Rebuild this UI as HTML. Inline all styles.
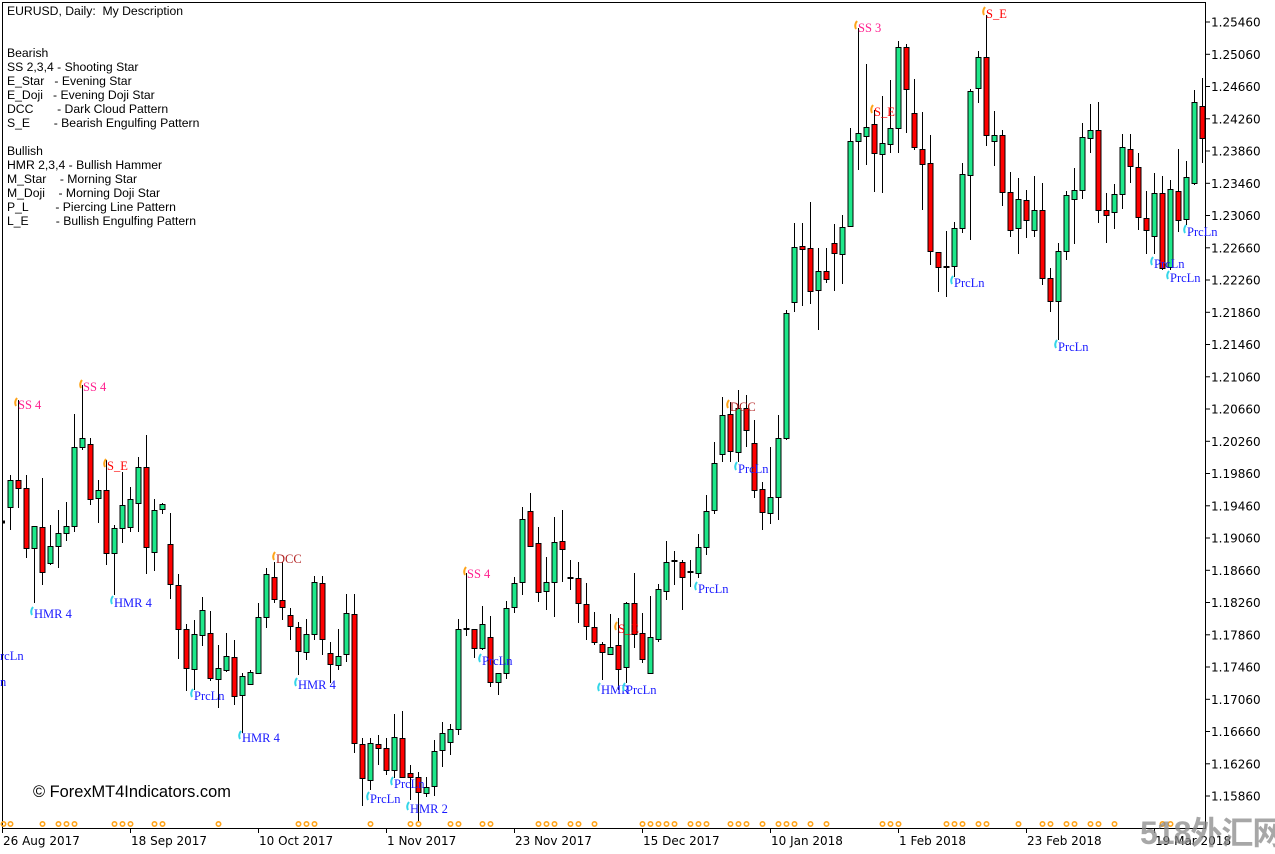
<!DOCTYPE html>
<html><head><meta charset="utf-8">
<style>
html,body{margin:0;padding:0;background:#fff;}
body{width:1275px;height:852px;overflow:hidden;position:relative;font-family:"DejaVu Sans","Liberation Sans",sans-serif;}
#legend{position:absolute;left:7px;top:4px;font-size:12.2px;line-height:14px;white-space:pre;color:#000;font-family:"Liberation Sans",sans-serif;}
#wm{position:absolute;left:1140px;top:808px;font-size:32px;font-weight:bold;color:#8a8a8a;opacity:.75;font-family:"Liberation Sans","Noto Sans CJK SC",sans-serif;letter-spacing:-1px;white-space:nowrap;}
#copy{position:absolute;left:33px;top:783px;font-size:16.4px;font-family:"Liberation Sans",sans-serif;color:#000;white-space:nowrap;}
svg{position:absolute;left:0;top:0;}
</style></head><body>
<svg id="s" width="1275" height="852" xmlns="http://www.w3.org/2000/svg"></svg>
<div id="legend">EURUSD, Daily:  My Description


Bearish
SS 2,3,4 - Shooting Star
E_Star   - Evening Star
E_Doji   - Evening Doji Star
DCC       - Dark Cloud Pattern
S_E       - Bearish Engulfing Pattern

Bullish
HMR 2,3,4 - Bullish Hammer
M_Star    - Morning Star
M_Doji    - Morning Doji Star
P_L        - Piercing Line Pattern
L_E        - Bullish Engulfing Pattern</div>
<div id="copy">© ForexMT4Indicators.com</div>
<div id="wm">518外汇网</div>
<script>
var C=[
[507,480,475,530],[480,488,400,508],[488,548,475,558],[548,526,526,603],[527,572,478,585],
[563,546,525,565],[546,533,510,568],[533,526,502,541],[526,447,414,532],[447,438,385,450],
[444,499,438,505],[498,490,480,523],[490,553,460,565],[553,528,525,595],[528,505,472,543],
[527,499,487,532],[503,467,457,532],[467,547,435,574],[552,510,499,571],[509,504,503,514],
[544,584,513,599],[585,629,574,659],[629,668,624,691],[669,634,620,690],[635,610,597,646],
[633,678,611,681],[679,668,645,708],[670,656,633,672],[657,696,640,705],[695,676,673,733],
[684,672,670,684],[673,617,603,674],[617,574,568,628],[577,599,562,603],[600,607,562,620],
[615,626,608,640],[627,651,622,675],[652,634,619,660],[634,582,576,640],[583,639,576,655],
[653,664,642,683],[665,656,629,670],[654,613,594,662],[614,743,594,753],[744,778,738,806],
[780,743,738,790],[744,748,735,765],[748,770,738,775],[770,737,714,778],[738,777,711,778],
[773,777,765,800],[777,792,772,822],[793,787,777,797],[786,751,740,796],[750,733,722,767],
[742,729,724,755],[729,629,619,735],[629,629,573,636],[629,648,629,658],[648,624,606,650],
[637,682,616,687],[682,673,673,695],[673,608,601,679],[607,583,577,613],[582,519,507,595],
[511,546,493,546],[543,592,527,602],[591,582,557,610],[582,542,517,617],[541,549,510,582],
[578,578,560,590],[578,603,562,623],[604,626,583,640],[627,642,612,645],[644,652,642,680],
[654,647,614,655],[645,669,618,690],[667,603,602,683],[603,634,573,648],[633,659,613,663],
[673,637,596,674],[639,589,584,642],[591,562,541,600],[561,561,551,585],[562,577,560,610],
[572,572,560,587],[573,547,534,578],[547,511,495,555],[510,463,442,514],[454,415,397,462],
[414,451,402,462],[452,408,390,462],[408,430,395,447],[443,490,420,498],[489,512,482,530],
[513,497,447,524],[497,438,415,520],[438,313,310,440],[302,247,223,312],[246,249,223,306],
[248,291,202,304],[290,271,248,330],[271,279,248,283],[243,253,224,291],[254,227,215,284],
[226,141,128,227],[141,133,28,170],[136,127,64,165],[124,153,110,192],[154,143,96,193],
[144,128,80,153],[128,47,41,153],[47,89,44,133],[113,147,79,150],[149,164,112,210],
[163,251,135,265],[252,267,252,292],[267,267,231,297],[266,228,222,277],[228,174,163,233],
[175,91,89,240],[88,57,51,103],[57,135,15,146],[141,135,111,166],[135,192,130,206],
[192,230,172,237],[228,199,178,254],[200,220,190,238],[230,210,176,237],[210,278,183,285],
[278,301,268,312],[301,251,243,340],[251,195,191,260],[199,190,168,244],[190,137,123,199],
[138,130,104,153],[130,210,102,223],[210,215,193,243],[212,194,184,229],[194,147,134,209],
[149,166,134,183],[167,217,153,230],[218,230,191,254],[236,193,173,254],[193,268,176,270],
[267,189,180,270],[191,220,149,232],[219,177,161,225],[183,102,90,185],[106,138,78,163]];
var s=document.getElementById('s'),h='';
h+='<rect x="2.5" y="2.5" width="1203" height="826" fill="none" stroke="#000" stroke-width="1"/>';
for(var k=0;k<25;k++){var y=22+k*32.25,v=(1.25460-k*0.004).toFixed(5);
 if(y>828)break;
 h+='<line x1="1205" y1="'+y.toFixed(1)+'" x2="1210" y2="'+y.toFixed(1)+'" stroke="#000"/>';
 h+='<text x="1211" y="'+(y+4.5).toFixed(1)+'" font-size="12" font-family="DejaVu Sans,Liberation Sans,sans-serif" fill="#000">'+v+'</text>';}
var D=[[2,'26 Aug 2017'],[130,'18 Sep 2017'],[258,'10 Oct 2017'],[386,'1 Nov 2017'],[514,'23 Nov 2017'],[642,'15 Dec 2017'],[770,'10 Jan 2018'],[898,'1 Feb 2018'],[1026,'23 Feb 2018'],[1154,'19 Mar 2018']];
D.forEach(function(d){h+='<line x1="'+(d[0]+.5)+'" y1="828" x2="'+(d[0]+.5)+'" y2="833" stroke="#000"/>';
 h+='<text x="'+(d[0]+1)+'" y="845" font-size="12" font-family="DejaVu Sans,Liberation Sans,sans-serif" fill="#000">'+d[1]+'</text>';});
h+='<line x1="3" y1="522" x2="5" y2="522" stroke="#000" stroke-width="3"/>';
C.forEach(function(c,i){var x=10+8*i+0.5,o=c[0],cl=c[1],hi=c[2],lo=c[3];
 h+='<line x1="'+x+'" y1="'+hi+'" x2="'+x+'" y2="'+lo+'" stroke="#000"/>';
 var top=Math.min(o,cl),bh=Math.abs(o-cl);
 if(bh<2){h+='<line x1="'+(x-3)+'" y1="'+top+'" x2="'+(x+3)+'" y2="'+top+'" stroke="#000" stroke-width="2"/>';}
 else{var col=cl<o?'#1ee88a':'#ff0000';
 h+='<rect x="'+(x-2.5)+'" y="'+(top+.5)+'" width="5" height="'+bh+'" fill="'+col+'" stroke="#000" stroke-width="1"/>';}
});
var L=[[18,409,'SS 4','#ff1f8e'],[83,391,'SS 4','#ff1f8e'],[107,470,'S_E','#ff0000'],[34,618,'HMR 4','#1a1aff'],[114,607,'HMR 4','#1a1aff'],
[276,563,'DCC','#b22222'],[0,660,'rcLn','#1a1aff'],[0,686,'n','#1a1aff'],[194,700,'PrcLn','#1a1aff'],[298,689,'HMR 4','#1a1aff'],
[242,742,'HMR 4','#1a1aff'],[370,803,'PrcLn','#1a1aff'],[394,788,'PrcLn','#1a1aff'],[410,813,'HMR 2','#1a1aff'],[467,578,'SS 4','#ff1f8e'],
[482,665,'PrcLn','#1a1aff'],[601,694,'HMR','#1a1aff'],[626,694,'PrcLn','#1a1aff'],[618,633,'S_E','#ff0000'],[698,593,'PrcLn','#1a1aff'],
[730,411,'DCC','#b22222'],[738,473,'PrcLn','#1a1aff'],[858,32,'SS 3','#ff1f8e'],[874,116,'S_E','#ff0000'],[986,18,'S_E','#ff0000'],
[954,287,'PrcLn','#1a1aff'],[1058,351,'PrcLn','#1a1aff'],[1154,268,'PrcLn','#1a1aff'],[1170,282,'PrcLn','#1a1aff'],[1187,236,'PrcLn','#1a1aff']];
L.forEach(function(l){var mc=l[3]=='#1a1aff'?'#33d6e8':'#ffa41a';
 if(l[0]>2){h+='<path d="M'+(l[0]-2)+' '+(l[1]-3)+' q-2 -4 1 -8" stroke="'+mc+'" stroke-width="2" fill="none"/>';}
 h+='<text x="'+l[0]+'" y="'+l[1]+'" font-size="12.5" font-family="Liberation Serif,serif" fill="'+l[3]+'">'+l[2]+'</text>';});
var B=[3,10,42,58,66,74,114,122,130,154,162,218,298,306,314,370,410,418,450,458,482,490,538,546,554,570,578,594,642,650,658,666,674,690,698,706,730,738,746,762,778,786,794,810,826,882,890,898,946,954,962,978,986,1018,1042,1050,1066,1074,1090,1098,1114,1162,1170];
B.forEach(function(x){h+='<circle cx="'+(x+.5)+'" cy="824" r="2.2" fill="none" stroke="#ffa41a" stroke-width="1.6"/>';});
s.innerHTML=h;
</script>
</body></html>
